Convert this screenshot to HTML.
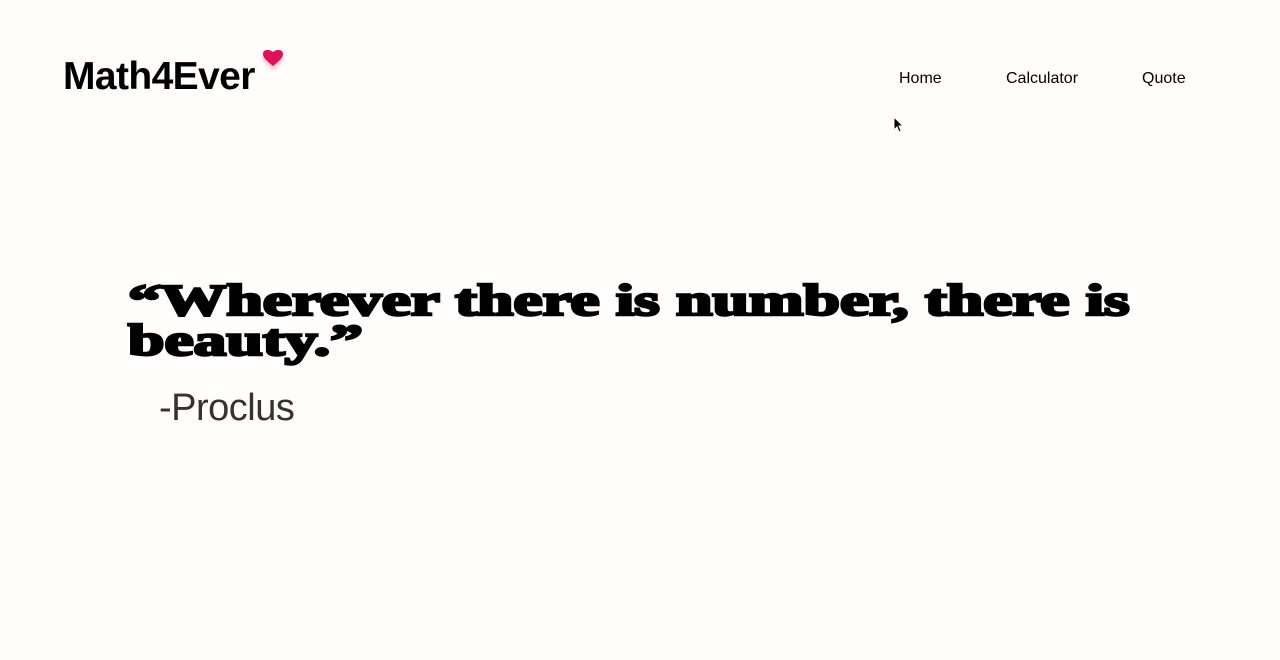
<!DOCTYPE html>
<html><head><meta charset="utf-8"><style>
body{margin:0;width:1280px;height:660px;background:#fffefc;font-family:"Liberation Sans",sans-serif;overflow:hidden;position:relative}
.logo{position:absolute;left:63px;top:55px;font-size:39px;font-weight:bold;color:#000;letter-spacing:-0.6px}
.heart{position:absolute;left:262px;top:48px}
.nav{position:absolute;top:70px;font-size:16px;color:#000}
.q{position:absolute;left:128px;font-family:"Liberation Serif",serif;font-weight:bold;font-size:44px;line-height:1;color:#000;-webkit-text-stroke:2.5px #000;transform-origin:0 0;white-space:nowrap}
.p{position:absolute;left:159px;top:387px;font-size:38px;font-weight:300;color:#333;letter-spacing:-0.5px}
</style></head><body>
<div class="logo">Math4Ever</div>
<svg class="heart" width="24" height="24" viewBox="0 0 24 24"><defs><filter id="g"><feGaussianBlur stdDeviation="2"/></filter></defs><path d="M11 20 C5 15 1 12 1 7 C1 3 6 1 11 5 C16 1 21 3 21 7 C21 12 17 15 11 20Z" fill="#f9a" filter="url(#g)" opacity=".6" transform="translate(0,2)"/><path d="M11 18 C5 13 1 10 1 6 C1 2 6 0 11 4 C16 0 21 2 21 6 C21 10 17 13 11 18Z" fill="#e0105a"/></svg>
<div class="nav" style="left:899px">Home</div>
<div class="nav" style="left:1006px">Calculator</div>
<div class="nav" style="left:1142px">Quote</div>
<svg style="position:absolute;left:893px;top:116px" width="12" height="18" viewBox="0 0 12 18"><path d="M1 1 L1 14 L4 11 L6 16 L8 15 L6 10 L10 10 Z" fill="#000" stroke="#fff" stroke-width="1"/></svg>
<div class="q" style="top:279px;transform:scaleX(1.49)">“Wherever there is number, there is</div>
<div class="q" style="top:319px;transform:scaleX(1.49)">beauty.”</div>
<div class="p">-Proclus</div>
</body></html>
